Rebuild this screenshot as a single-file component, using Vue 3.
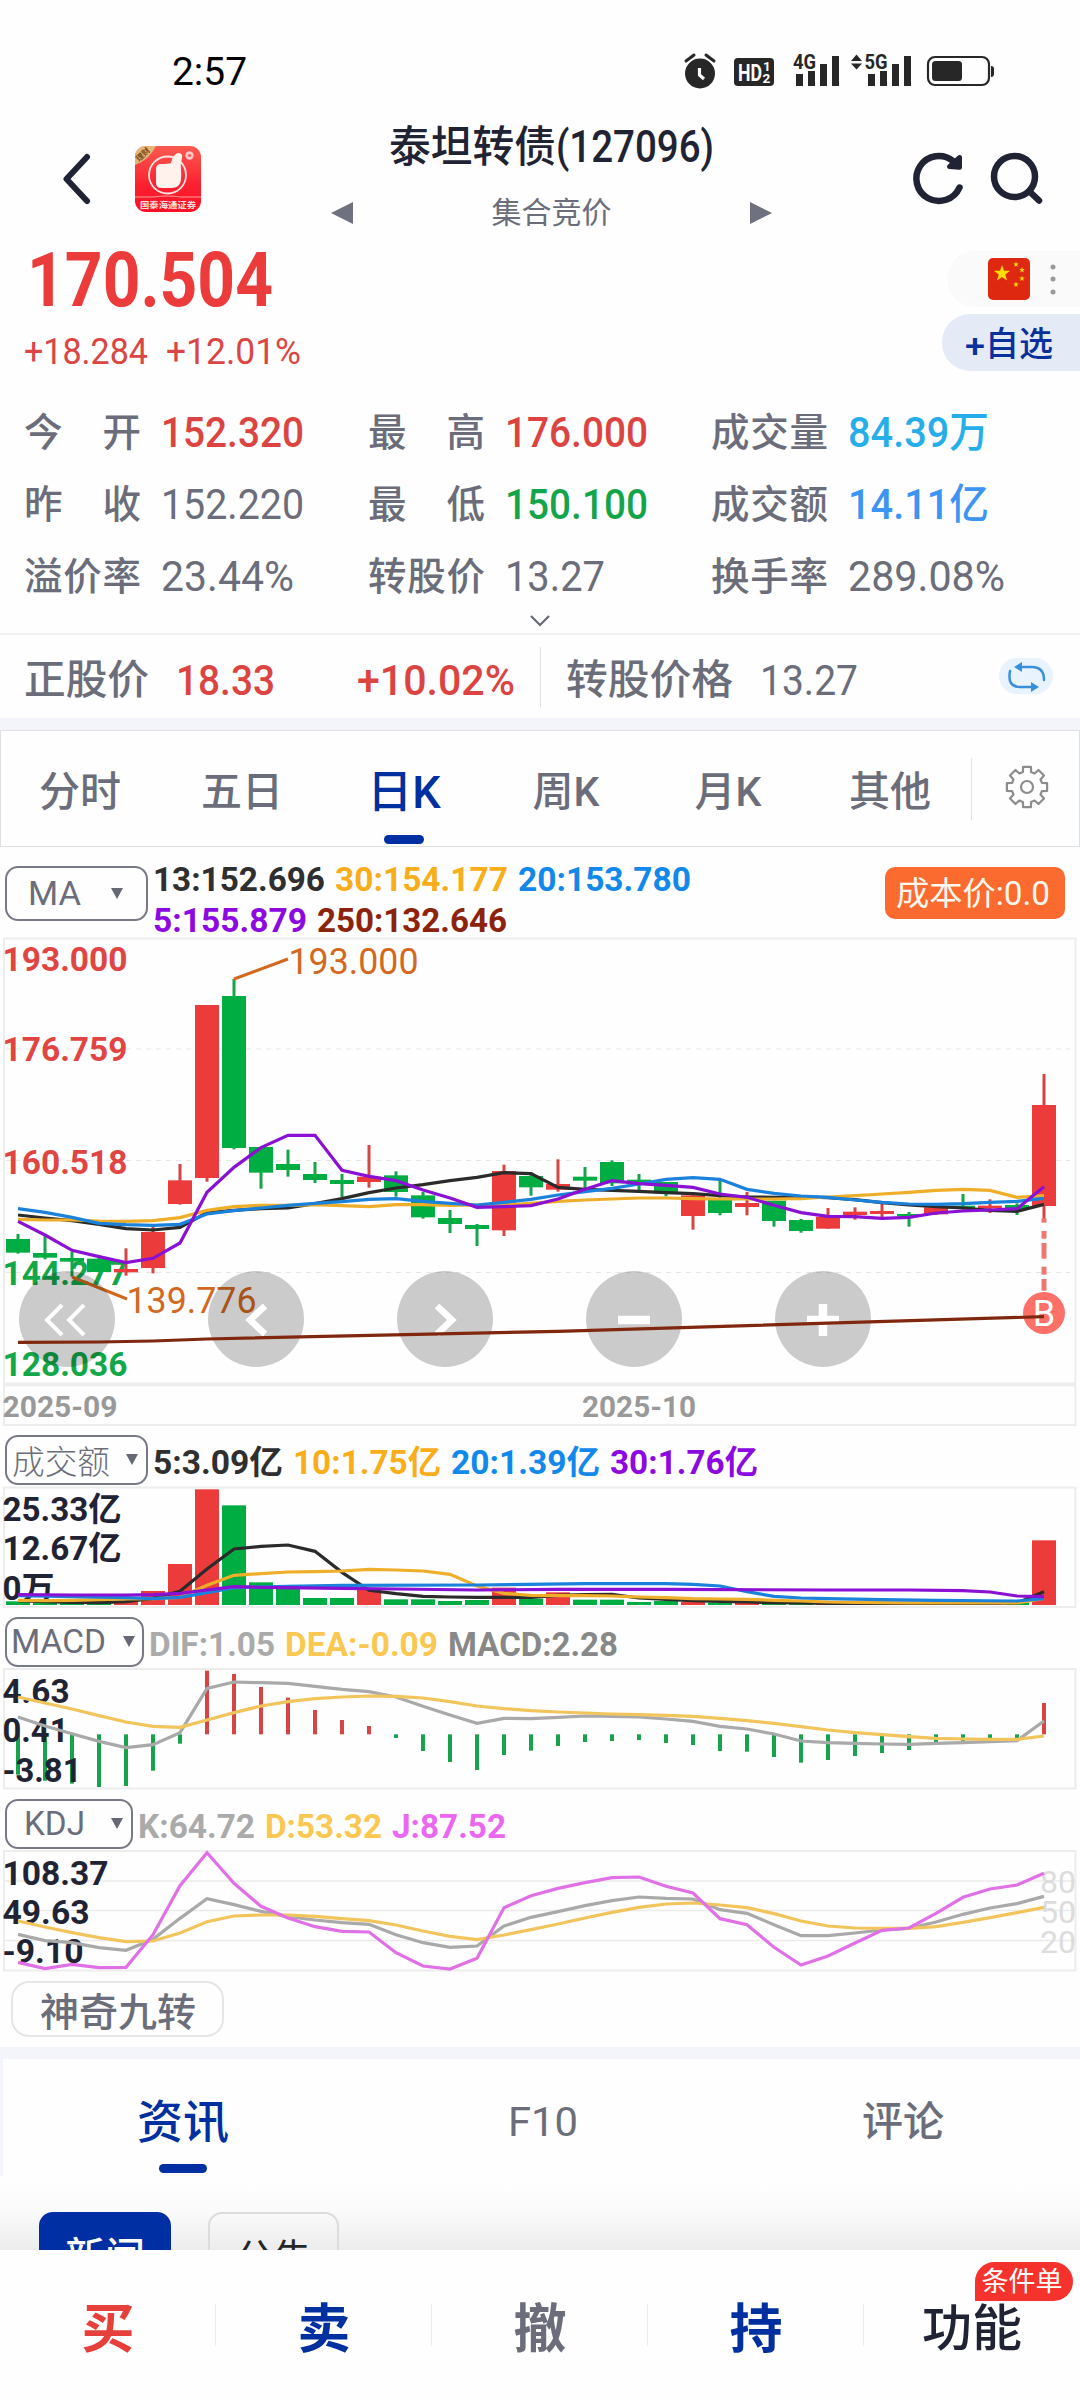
<script setup>
// Stretches a text run horizontally so that it occupies the given width in the layout.
const vFit = {
  mounted(el, { value }) {
    const natural = el.getBoundingClientRect().width
    el.style.transform = `scaleX(${value / natural})`
    el.style.marginRight = `${value - natural}px`
  }
}

const stats = [
  { label: '今开', value: '152.320', tone: 'up', w: 143 },
  { label: '最高', value: '176.000', tone: 'up', w: 143 },
  { label: '成交量', value: '84.39万', tone: 'cyan', w: 141 },
  { label: '昨收', value: '152.220', tone: 'plain', w: 143 },
  { label: '最低', value: '150.100', tone: 'down', w: 143 },
  { label: '成交额', value: '14.11亿', tone: 'blue', w: 141 },
  { label: '溢价率', value: '23.44%', tone: 'plain', w: 133 },
  { label: '转股价', value: '13.27', tone: 'plain', w: 100 },
  { label: '换手率', value: '289.08%', tone: 'plain', w: 157 }
]

const periods = ['分时', '五日', '日K', '周K', '月K', '其他']

const maLegend = [
  [
    { t: '13:152.696', c: '#2f2f2f', w: 172 },
    { t: '30:154.177', c: '#f8ae1b', w: 173 },
    { t: '20:153.780', c: '#1188ea', w: 173 }
  ],
  [
    { t: '5:155.879', c: '#8c0ae0', w: 154 },
    { t: '250:132.646', c: '#8c230c', w: 190 }
  ]
]
const volLegend = [
  { t: '5:3.09亿', c: '#2f2f2f', w: 130 },
  { t: '10:1.75亿', c: '#f8ae1b', w: 148 },
  { t: '20:1.39亿', c: '#1188ea', w: 149 },
  { t: '30:1.76亿', c: '#8c0ae0', w: 148 }
]
const macdLegend = [
  { t: 'DIF:1.05', c: '#aaaaaa', w: 126 },
  { t: 'DEA:-0.09', c: '#fac750', w: 153 },
  { t: 'MACD:2.28', c: '#888888', w: 170 }
]
const kdjLegend = [
  { t: 'K:64.72', c: '#aaaaaa', w: 117 },
  { t: 'D:53.32', c: '#fac750', w: 117 },
  { t: 'J:87.52', c: '#ea68f0', w: 114 }
]

const RED = '#eb3b3b'
const GREEN = '#00ad43'
const cx = (i) => 18 + 27 * i
const scale = (base) => (v) => base + v / 3
const yK = scale(1080)
const yV = scale(1430)
const yJ = scale(1780)

// [body top, body bottom, high, low, rising]
const candles = [
  [477, 518, 462, 521, 0], [519, 533, 467, 538, 0], [534, 545, 515, 590, 0], [536, 576, 530, 576, 0],
  [567, 577, 505, 587, 1], [456, 564, 440, 580, 1], [301, 372, 252, 374, 1], [-225, 294, -225, 305, 1],
  [-252, 204, -303, 208, 0], [201, 278, 201, 326, 0], [252, 270, 209, 290, 0], [282, 300, 246, 309, 0],
  [300, 312, 282, 352, 0], [290, 306, 195, 323, 1], [286, 336, 274, 350, 0], [346, 412, 336, 416, 0],
  [414, 432, 390, 459, 0], [435, 447, 432, 498, 0], [273, 451, 254, 468, 1], [288, 322, 276, 347, 0],
  [312, 329, 238, 335, 1], [290, 302, 261, 326, 0], [246, 310, 241, 318, 0], [299, 306, 282, 331, 0],
  [306, 340, 306, 349, 0], [346, 408, 346, 449, 1], [360, 399, 298, 406, 0], [369, 381, 336, 406, 1],
  [362, 423, 362, 440, 0], [420, 453, 417, 458, 0], [410, 446, 384, 446, 1], [395, 405, 382, 419, 1],
  [393, 402, 370, 413, 1], [402, 408, 396, 440, 0], [382, 403, 382, 405, 1], [377, 386, 342, 389, 0],
  [377, 385, 358, 399, 1], [375, 388, 370, 405, 0], [75, 378, -18, 418, 1]
].map(([t, b, h, l, up], i) => ({
  x: cx(i), top: yK(t), height: (b - t) / 3, high: yK(h), low: yK(l), fill: up ? RED : GREEN, up
}))

const volTops = [514, 516, 515, 517, 514, 483, 402, 178, 226, 457, 465, 504, 504, 478, 508, 508, 513, 510, 473, 506,
  487, 509, 509, 516, 513, 515, 517, 517, 519, 519, 521, 521, 521, 522, 521, 521, 521, 517, 331]
const volBars = volTops.map((v, i) => ({ x: cx(i) - 12, y: yV(v), h: (525 - v) / 3, fill: candles[i].fill }))

const macdEnds = [1034, 1052, 1061, 1071, 1068, 1022, 941, 722, 732, 771, 803, 840, 870, 888, 924, 963, 996, 1020, 975,
  962, 948, 936, 933, 930, 939, 945, 963, 965, 981, 998, 990, 978, 969, 960, 945, 935, 927, 924, 819]
const macdBars = macdEnds.map((v, i) => ({
  x: cx(i) - 2, y: yV(Math.min(v, 913)), h: Math.abs(v - 913) / 3, fill: v < 913 ? '#d64444' : '#16a34b'
}))

const line = (y, vals) =>
  vals.map((v, i) => (Array.isArray(v) ? `${cx(v[0])},${y(v[1])}` : `${cx(i)},${y(v)}`)).join(' ')

const maLines = [
  { c: '#2b2b2b', p: line(yK, [405, 414, 422, 433, 446, 450, 442, 398, 391, 386, 384, 371, 356, 338, 324, 314, 302, 292, 278, 281, 322, 328, 331, 334, 338, 341, 347, 351, 352, 351, 353, 359, 368, 375, 380, 384, 391, 394, 373]) },
  { c: '#efae2a', p: line(yK, [418, 420, 420, 423, 424, 422, 413, 391, 380, 376, 376, 374, 377, 380, 374, 374, 376, 375, 375, 370, 364, 360, 357, 354, 354, 356, 357, 357, 357, 356, 351, 347, 342, 337, 331, 328, 331, 352, 347]) },
  { c: '#1b82dc', p: line(yK, [386, 397, 412, 430, 434, 436, 433, 402, 392, 384, 376, 370, 365, 358, 356, 364, 370, 375, 367, 358, 345, 335, 325, 312, 298, 293, 298, 328, 340, 348, 352, 360, 367, 372, 373, 371, 367, 364, 355]) },
  { c: '#8a10d4', p: line(yK, [424, 465, 511, 530, 548, 535, 489, 337, 262, 203, 166, 166, 271, 289, 302, 330, 354, 382, 380, 377, 357, 328, 302, 311, 316, 322, 342, 352, 376, 398, 409, 410, 415, 412, 399, 393, 390, 386, 320]) }
]
const yearLine = line(yK, [[0, 787], [3, 786], [5, 783], [6, 780], [7, 777], [20, 754], [38, 710]])

const volLines = [
  { c: '#2b2b2b', p: line(yV, [512, 515, 517, 518, 515, 505, 484, 417, 357, 349, 345, 364, 427, 481, 491, 499, 501, 502, 502, 502, 496, 494, 493, 504, 508, 512, 514, 516, 518, 519, 520, 520, 520, 520, 520, 520, 520, 519, 485]) },
  { c: '#efae2a', p: line(yV, [511, 512, 511, 509, 507, 506, 502, 466, 436, 431, 426, 425, 423, 418, 420, 423, 433, 468, 490, 496, 497, 497, 498, 501, 503, 506, 507, 508, 511, 513, 516, 517, 518, 519, 519, 519, 519, 519, 505]) },
  { c: '#1b82dc', p: line(yV, [[0, 497], [2, 500], [4, 503], [5, 506], [6, 502], [7, 488], [8, 473], [10, 469], [12, 466], [17, 465], [21, 461], [24, 461], [25, 463], [26, 468], [27, 485], [28, 499], [29, 504], [30, 506], [32, 509], [34, 511], [37, 513], [38, 506]]) },
  { c: '#8a10d4', p: line(yV, [[0, 494], [2, 495], [4, 495], [5, 494], [6, 490], [7, 480], [8, 470], [9, 472], [12, 475], [14, 477], [17, 480], [20, 478], [24, 478], [30, 480], [33, 480], [35, 482], [36, 486], [37, 498], [38, 500]]) }
]
const macdLines = [
  { c: '#a9a9a9', p: line(yV, [861, 888, 911, 934, 953, 944, 908, 775, 756, 758, 760, 769, 778, 785, 801, 829, 855, 880, 865, 866, 862, 858, 859, 861, 867, 874, 889, 897, 912, 933, 938, 940, 942, 943, 940, 938, 935, 932, 873]) },
  { c: '#f2c55c', p: line(yV, [801, 819, 837, 857, 876, 889, 892, 870, 848, 828, 815, 806, 801, 798, 799, 804, 815, 828, 836, 842, 846, 849, 852, 854, 856, 859, 865, 872, 880, 890, 900, 908, 914, 920, 925, 927, 928, 928, 918]) }
]
const kdjLines = [
  { c: '#a9a9a9', p: line(yJ, [463, 482, 488, 503, 511, 478, 415, 356, 374, 394, 410, 420, 428, 433, 464, 488, 502, 498, 438, 412, 395, 377, 362, 351, 355, 357, 389, 400, 434, 467, 467, 459, 450, 445, 426, 403, 384, 371, 349]) },
  { c: '#f2c55c', p: line(yJ, [423, 441, 458, 473, 485, 483, 459, 425, 408, 405, 405, 409, 416, 422, 435, 453, 469, 479, 465, 449, 432, 414, 397, 382, 372, 369, 375, 383, 401, 423, 438, 444, 445, 445, 440, 427, 413, 398, 382]) },
  { c: '#e070e6', p: line(yJ, [547, 566, 553, 563, 562, 464, 317, 218, 310, 379, 414, 440, 454, 456, 518, 558, 567, 535, 383, 347, 325, 308, 293, 291, 319, 339, 416, 434, 502, 555, 528, 489, 451, 444, 400, 352, 327, 315, 280]) }
]

const priceAxis = [
  { t: '193.000', y: 971, c: '#e04543' },
  { t: '176.759', y: 1061, c: '#e04543' },
  { t: '160.518', y: 1174, c: '#e04543' },
  { t: '144.277', y: 1285, c: '#12a84a' },
  { t: '128.036', y: 1375.5, c: '#12a84a' }
]
const dashes = [[415, 428], [453, 476], [489, 536], [560, 584], [597, 632]].map(([a, b]) => ({ y: yK(a), h: (b - a) / 3 }))
const toolCenters = [67, 256, 445, 634, 823]

// Gear outline with eight teeth
const gear = (() => {
  const pts = []
  for (let k = 0; k < 8; k++) {
    const a = (k * Math.PI) / 4 - Math.PI / 2
    for (const [da, r] of [[-0.27, 15.5], [-0.19, 20.5], [0.19, 20.5], [0.27, 15.5]]) {
      pts.push(`${(22 + r * Math.cos(a + da)).toFixed(1)},${(22 + r * Math.sin(a + da)).toFixed(1)}`)
    }
  }
  return pts.join(' ')
})()

const star = (x, y, r) =>
  Array.from({ length: 10 }, (_, k) => {
    const a = (k * Math.PI) / 5 - Math.PI / 2
    const q = k % 2 ? r * 0.4 : r
    return `${(x + q * Math.cos(a)).toFixed(2)},${(y + q * Math.sin(a)).toFixed(2)}`
  }).join(' ')

const actions = [
  { t: '买', c: 'buy' }, { t: '卖', c: 'sell' }, { t: '撤', c: 'cancel' }, { t: '持', c: 'sell' }
]
</script>

<template>
  <div class="screen">
    <div class="status">
      <span class="clock"><span v-fit="75" class="fit">2:57</span></span>
      <svg class="status-icons" width="320" height="50" viewBox="680 48 320 50" fill="#272727">
        <circle cx="700" cy="73.5" r="15" />
        <path d="M686 61l8-6M714 61l-8-6" stroke="#272727" stroke-width="3" stroke-linecap="round" />
        <path d="M699.5 68v7l4.5 4" stroke="#fff" stroke-width="3.2" fill="none" />
        <rect x="734" y="58" width="40" height="28" rx="4" />
        <text x="738" y="80.5" font-size="23" font-weight="700" fill="#fff" textLength="24" lengthAdjust="spacingAndGlyphs">HD</text>
        <text x="763" y="71" font-size="13.5" font-weight="700" fill="#fff">1</text>
        <text x="762.5" y="83" font-size="13.5" font-weight="700" fill="#fff">2</text>
        <text x="793" y="68.5" font-size="20" font-weight="700" textLength="23" lengthAdjust="spacingAndGlyphs">4G</text>
        <path d="M796 74h7v12h-7zM808 71h7v15h-7zM820 64h7v22h-7zM832 56h7v30h-7z" />
        <path d="M851 61l5.500-6.500 5.500 6.500zM851 63.500h11l-5.500 6z" />
        <text x="864.500" y="68.500" font-size="20" font-weight="700" textLength="23" lengthAdjust="spacingAndGlyphs">5G</text>
        <path d="M868 74h7v12h-7zM880 71h7v15h-7zM892 64h7v22h-7zM904 56h7v30h-7z" />
        <rect x="928" y="57" width="61" height="28" rx="7" fill="none" stroke="#272727" stroke-width="2.200" />
        <rect x="932" y="61" width="30" height="20" rx="3.500" />
        <path d="M991 66q3 0 3 3v5q0 3-3 3z" />
      </svg>
    </div>

    <header class="header">
      <svg class="back" width="32" height="54" viewBox="0 0 32 54"><path d="M26 5 5.500 27 26 49" fill="none" stroke="#1f2333" stroke-width="6" stroke-linecap="round" stroke-linejoin="round" /></svg>
      <svg class="logo" width="66" height="66" viewBox="0 0 66 66">
        <defs>
          <linearGradient id="lg" x1="0" y1="0" x2="0" y2="1"><stop offset="0" stop-color="#fb5a50" /><stop offset=".6" stop-color="#fb2030" /><stop offset="1" stop-color="#fb1025" /></linearGradient>
          <clipPath id="lc"><rect width="66" height="66" rx="11" /></clipPath>
        </defs>
        <g clip-path="url(#lc)">
          <rect width="66" height="66" fill="url(#lg)" />
          <path d="M0 0H21Q14 14 0 19z" fill="#e2b878" />
          <text x="0" y="0" transform="translate(4 16) rotate(-43)" font-size="8" font-weight="700" fill="#7a4a1c">理财</text>
          <circle cx="32.500" cy="29" r="18.500" fill="none" stroke="#ffe4e0" stroke-width="1.800" />
          <path d="M36 17q2-9 7-10 5 0 4 5-2 6-1 12 1 12-2 15-2 3-8 3H26q-5 0-5-5V23q0-5 5-5 7 0 10-1z" fill="#fff1ec" />
          <circle cx="54.500" cy="9.500" r="4.200" fill="#ffc9c4" />
          <circle cx="54.500" cy="9.500" r="1.600" fill="#fb5a50" />
          <path d="M0 51h18q14-2 28 0h20" fill="none" stroke="#ff9a98" stroke-width="1.200" />
          <text x="5" y="62" font-size="8.500" font-weight="700" fill="#ffe0de" textLength="56" lengthAdjust="spacingAndGlyphs">国泰海通证券</text>
        </g>
      </svg>
      <div class="title-block">
        <div class="title"><span v-fit="167" class="fit">泰坦转债</span><span v-fit="158" class="fit">(127096)</span></div>
        <div class="sub">
          <svg width="22" height="22" viewBox="0 0 22 22"><path d="M22 0v22L0 11z" fill="#6f717e" /></svg>
          <span v-fit="120" class="fit">集合竞价</span>
          <svg width="22" height="22" viewBox="0 0 22 22"><path d="M0 0v22L22 11z" fill="#6f717e" /></svg>
        </div>
      </div>
      <svg class="head-icons" width="134" height="58" viewBox="910 150 134 58" fill="none" stroke="#1f2333" stroke-width="6.500" stroke-linecap="round">
        <path d="M959.500 187.500A22.500 22.500 0 1 1 953 161" />
        <path d="M949.500 166.500l10 .8L959.500 157.500z" fill="#1f2333" stroke-width="5" stroke-linejoin="round" />
        <circle cx="1014.500" cy="176.500" r="20.500" />
        <path d="M1029.500 191.500l9.500 9" />
      </svg>
    </header>

    <section class="quote">
      <div class="price-block">
        <div class="price"><span v-fit="246" class="fit">170.504</span></div>
        <div class="change"><span v-fit="124" class="fit">+18.284</span><span v-fit="135" class="fit">+12.01%</span></div>
      </div>
      <div class="pills">
        <div class="flag-pill">
          <svg width="42" height="42" viewBox="0 0 42 42">
            <rect width="42" height="42" rx="5" fill="#de2910" />
            <g fill="#ffde00">
              <polygon :points="star(14, 15.5, 8.5)" />
              <polygon :points="star(28, 6.5, 3)" /><polygon :points="star(34, 12, 3)" />
              <polygon :points="star(34, 20.5, 3)" /><polygon :points="star(28, 26.5, 3)" />
            </g>
          </svg>
          <svg class="dots" width="8" height="34" viewBox="0 0 8 34" fill="#999"><circle cx="4" cy="5" r="2.500" /><circle cx="4" cy="17" r="2.500" /><circle cx="4" cy="30" r="2.500" /></svg>
        </div>
        <div class="watch-pill"><span v-fit="20" class="fit plus">+</span><span v-fit="68" class="fit">自选</span></div>
      </div>
    </section>

    <section class="stats">
      <div v-for="s in stats" :key="s.label" class="stat">
        <span class="stat-label"><span v-for="ch in s.label" :key="ch">{{ ch }}</span></span>
        <span v-fit="s.w" class="fit stat-value" :class="s.tone">{{ s.value }}</span>
      </div>
    </section>
    <div class="expand"><svg width="24" height="14" viewBox="0 0 24 14"><path d="M3 1l9 9 9-9" fill="none" stroke="#666975" stroke-width="2.200" /></svg></div>

    <section class="underlying">
      <div class="under-left">
        <span v-fit="125" class="fit">正股价</span>
        <span v-fit="99" class="fit up num">18.33</span>
        <span v-fit="158" class="fit up num">+10.02%</span>
      </div>
      <span class="under-divider"></span>
      <div class="under-right">
        <span v-fit="167" class="fit">转股价格</span>
        <span v-fit="98" class="fit num">13.27</span>
        <svg class="sync" width="56" height="38" viewBox="0 0 56 38">
          <rect x="1" y="1" width="54" height="36" rx="18" fill="#e8f3fd" />
          <g fill="none" stroke="#3a8fdd" stroke-width="2.500" stroke-linecap="round"><path d="M22 10H34Q46 10 46 23" /><path d="M12 14Q9 30 22 30H36" /></g>
          <path d="M16 10l8-5v10zM41 30l-8-5v10z" fill="#3a8fdd" />
        </svg>
      </div>
    </section>
    <div class="band"></div>

    <nav class="periods">
      <div class="period-list">
        <div v-for="p in periods" :key="p" class="period" :class="{ active: p === '日K' }">{{ p }}</div>
      </div>
      <span class="period-divider"></span>
      <svg class="gear" width="44" height="44" viewBox="0 0 44 44" fill="none" stroke="#8c8c8c" stroke-width="2.200" stroke-linejoin="round"><polygon :points="gear" /><circle cx="22" cy="22" r="6" /></svg>
    </nav>

    <div class="ma-bar">
      <div class="picker ma"><span v-fit="53" class="fit">MA</span><i class="caret"></i></div>
      <div class="ma-lines">
        <div v-for="(row, r) in maLegend" :key="r" class="legend">
          <span v-for="l in row" :key="l.t" v-fit="l.w" class="fit" :style="{ color: l.c }">{{ l.t }}</span>
        </div>
      </div>
      <div class="cost"><span v-fit="154" class="fit">成本价:0.0</span></div>
    </div>

    <svg class="chart" width="1080" height="489" viewBox="0 937 1080 489">
      <path d="M4 938.500H1075.500V1383.500H4zM4 1385.500H1075.500V1425H4z" fill="none" stroke="#ededed" stroke-width="2" />
      <path d="M6 1049H1070M6 1160.500H1070M6 1272.500H1070" stroke="#e6e6e6" stroke-width="1.200" stroke-dasharray="5 5" />
      <text v-for="a in priceAxis" :key="a.t" x="2.500" :y="a.y" :fill="a.c" class="axis" textLength="125" lengthAdjust="spacingAndGlyphs">{{ a.t }}</text>
      <g v-for="k in candles" :key="k.x" :fill="k.fill">
        <rect :x="k.x - 1.500" :y="k.high" width="3" :height="k.low - k.high" :fill="k.up ? '#d64444' : '#16a34b'" />
        <rect :x="k.x - 12" :y="k.top" width="24" :height="k.height" />
      </g>
      <polyline v-for="l in maLines" :key="l.c" :points="l.p" :stroke="l.c" class="curve" />
      <path d="M234 979L288 959M72 1277L127 1299" stroke="#d2691e" stroke-width="3" />
      <g font-size="36" fill="#d2691e">
        <text x="288.500" y="974" textLength="130" lengthAdjust="spacingAndGlyphs">193.000</text>
        <text x="126.500" y="1312.500" textLength="130" lengthAdjust="spacingAndGlyphs">139.776</text>
      </g>
      <circle v-for="c in toolCenters" :key="c" :cx="c" cy="1319" r="48" fill="rgba(0,0,0,.2)" />
      <g fill="none" stroke="#fff" stroke-width="4">
        <path d="M62 1305L47 1320l15 15M84 1305l-15 15 15 15" />
        <path d="M265 1306l-15 14 15 14M437 1306l15 14-15 14" stroke-width="6.500" />
        <path d="M618 1320h32M807 1320h32M823 1304v32" stroke-width="8.500" />
      </g>
      <rect v-for="d in dashes" :key="d.y" x="1041.500" :y="d.y" width="5" :height="d.h" fill="#ec7872" />
      <circle cx="1044" cy="1313" r="21" fill="#ff7069" />
      <text x="1044" y="1326" font-size="36" fill="#fff" text-anchor="middle">B</text>
      <polyline :points="yearLine" stroke="#80280f" class="curve" />
      <g font-size="30" font-weight="700" fill="#999">
        <text x="2.500" y="1417" textLength="115" lengthAdjust="spacingAndGlyphs">2025-09</text>
        <text x="582" y="1417" textLength="114" lengthAdjust="spacingAndGlyphs">2025-10</text>
      </g>
    </svg>

    <div class="ind-bar">
      <div class="picker vol"><span v-fit="98" class="fit thin">成交额</span><i class="caret"></i></div>
      <div class="legend"><span v-for="l in volLegend" :key="l.t" v-fit="l.w" class="fit" :style="{ color: l.c }">{{ l.t }}</span></div>
    </div>
    <svg class="chart" width="1080" height="122" viewBox="0 1486 1080 122">
      <rect x="4" y="1487.500" width="1071.500" height="119.500" class="frame" />
      <g class="axis dark">
        <text x="2.500" y="1521" textLength="119" lengthAdjust="spacingAndGlyphs">25.33亿</text>
        <text x="2.500" y="1560" textLength="119" lengthAdjust="spacingAndGlyphs">12.67亿</text>
        <text x="2.500" y="1600" textLength="52" lengthAdjust="spacingAndGlyphs">0万</text>
      </g>
      <rect v-for="b in volBars" :key="b.x" :x="b.x" :y="b.y" width="24" :height="b.h" :fill="b.fill" />
      <polyline v-for="l in volLines" :key="l.c" :points="l.p" :stroke="l.c" class="curve" />
    </svg>

    <div class="ind-bar">
      <div class="picker macd"><span v-fit="95" class="fit">MACD</span><i class="caret"></i></div>
      <div class="legend"><span v-for="l in macdLegend" :key="l.t" v-fit="l.w" class="fit" :style="{ color: l.c }">{{ l.t }}</span></div>
    </div>
    <svg class="chart" width="1080" height="122" viewBox="0 1668 1080 122">
      <rect x="4" y="1669" width="1071.500" height="119.500" class="frame" />
      <rect v-for="b in macdBars" :key="b.x" :x="b.x" :y="b.y" width="4" :height="b.h" :fill="b.fill" />
      <g class="axis dark">
        <text x="2.500" y="1703" textLength="67" lengthAdjust="spacingAndGlyphs">4.63</text>
        <text x="2.500" y="1742" textLength="66" lengthAdjust="spacingAndGlyphs">0.41</text>
        <text x="2.500" y="1782" textLength="79" lengthAdjust="spacingAndGlyphs">-3.81</text>
      </g>
      <polyline v-for="l in macdLines" :key="l.c" :points="l.p" :stroke="l.c" class="curve" />
    </svg>

    <div class="ind-bar">
      <div class="picker kdj"><span v-fit="61" class="fit">KDJ</span><i class="caret"></i></div>
      <div class="legend"><span v-for="l in kdjLegend" :key="l.t" v-fit="l.w" class="fit" :style="{ color: l.c }">{{ l.t }}</span></div>
    </div>
    <svg class="chart" width="1080" height="122" viewBox="0 1850 1080 122">
      <rect x="4" y="1851" width="1071.500" height="119.500" class="frame" />
      <path d="M4 1881H1075M4 1910.500H1075M4 1940.500H1075" stroke="#ebebeb" stroke-width="1.500" />
      <g font-size="31" fill="#dcdcdc">
        <text x="1040" y="1893" textLength="36" lengthAdjust="spacingAndGlyphs">80</text>
        <text x="1040" y="1923" textLength="36" lengthAdjust="spacingAndGlyphs">50</text>
        <text x="1040" y="1953" textLength="36" lengthAdjust="spacingAndGlyphs">20</text>
      </g>
      <g class="axis dark">
        <text x="2.500" y="1885" textLength="106" lengthAdjust="spacingAndGlyphs">108.37</text>
        <text x="2.500" y="1924" textLength="87" lengthAdjust="spacingAndGlyphs">49.63</text>
        <text x="2.500" y="1963" textLength="81" lengthAdjust="spacingAndGlyphs">-9.10</text>
      </g>
      <polyline v-for="l in kdjLines" :key="l.c" :points="l.p" :stroke="l.c" class="curve" />
    </svg>

    <div class="magic"><span v-fit="156" class="fit">神奇九转</span></div>
    <div class="band"></div>

    <nav class="info-tabs">
      <div class="info-tab on">资讯</div>
      <div class="info-tab"><span v-fit="70" class="fit">F10</span></div>
      <div class="info-tab">评论</div>
    </nav>

    <div class="news">
      <div class="chip solid">新闻</div>
      <div class="chip">公告</div>
    </div>

    <footer class="actions">
      <div v-for="a in actions" :key="a.t" class="action" :class="a.c">{{ a.t }}</div>
      <div class="action more">功能<span class="badge">条件单</span></div>
    </footer>
  </div>
</template>

<style>
body {
  margin: 0;
  background: #fff;
}
</style>

<style scoped>
.screen {
  width: 1080px;
  height: 2400px;
  overflow: hidden;
  display: flex;
  flex-direction: column;
  background: #fefefe;
  color: #6b6d7a;
  font-family: Roboto, "Noto Sans CJK SC", sans-serif;
}
.screen > * {
  flex: none;
}
.fit {
  display: inline-block;
  white-space: nowrap;
  transform-origin: 0 50%;
}
svg {
  display: block;
  flex: none;
}
.up { color: #dc4441; }
.down { color: #14a54b; }
.cyan { color: #27aeea; }
.blue { color: #3c95f2; }
.plain { color: #6b6d7a; }

.status {
  height: 98px;
  display: flex;
  align-items: flex-end;
  justify-content: space-between;
  padding: 0 80px 0 172px;
}
.clock {
  height: 50px;
  line-height: 49px;
  font-size: 38px;
  color: #000;
}
.header {
  height: 142px;
  display: flex;
  align-items: flex-start;
}
.back { margin: 54px 0 0 61px; }
.logo { margin: 48px 0 0 42px; }
.title-block {
  margin: 22px 0 0 130px;
  width: 441px;
}
.title {
  height: 54px;
  line-height: 55px;
  font-size: 43px;
  color: #1f2333;
  padding-left: 58px;
  display: flex;
  font-weight: 500;
}
.title .fit:last-child { font-size: 44px; }
.sub {
  margin-top: 19px;
  height: 40px;
  line-height: 40px;
  font-size: 30px;
  display: flex;
  align-items: center;
  justify-content: space-between;
}
.head-icons { margin: 52px 0 0 138px; }

.quote {
  height: 155px;
  display: flex;
  justify-content: space-between;
}
.price {
  margin-top: 5px;
  padding-left: 27px;
  height: 70px;
  line-height: 70px;
  font-size: 76px;
  font-weight: 700;
  color: #eb3b3b;
}
.change {
  margin-top: 16px;
  padding-left: 24px;
  line-height: 42px;
  font-size: 37px;
  color: #d94644;
  display: flex;
  gap: 18px;
}
.pills {
  display: flex;
  flex-direction: column;
  align-items: flex-end;
}
.flag-pill {
  margin-top: 11px;
  width: 92px;
  height: 56px;
  padding-left: 41px;
  background: #fafafa;
  border-radius: 28px 0 0 28px;
  display: flex;
  align-items: center;
}
.dots { margin-left: 19px; }
.watch-pill {
  margin-top: 7px;
  width: 116px;
  height: 57px;
  line-height: 61px;
  padding-left: 22px;
  display: flex;
  background: #e4eaf6;
  border-radius: 28px 0 0 28px;
  color: #0a309b;
  font-size: 34px;
  font-weight: 500;
}
.plus { line-height: 63px; margin-left: 1px; }

.stats {
  height: 216px;
  padding: 0 0 0 24px;
  display: grid;
  grid-template-columns: 344px 343px 1fr;
  grid-auto-rows: 72px;
}
.stat {
  display: flex;
  gap: 20px;
  align-items: center;
  height: 75px;
}
.stat-label {
  width: 117px;
  font-size: 38.5px;
  font-weight: 500;
  line-height: 76px;
  display: flex;
  justify-content: space-between;
}
.stat-value {
  font-size: 42px;
  line-height: 75px;
}
.stat-value.up, .stat-value.down, .stat-value.cyan, .stat-value.blue { font-weight: 500; }
.expand {
  height: 22px;
  display: flex;
  justify-content: center;
  align-items: center;
}
.underlying {
  height: 85px;
  box-sizing: border-box;
  border-top: 2px solid #f3f3f5;
  display: flex;
  font-size: 41px;
  line-height: 90px;
}
.under-left, .under-right {
  display: flex;
  font-weight: 500;
}
.num {
  font-size: 43px;
  font-weight: 400;
  margin-left: 27px;
}
.num.up { font-weight: 500; }
.under-left {
  box-sizing: border-box;
  width: 540px;
  padding-left: 24px;
}
.under-left .num + .num { margin-left: 82px; }
.under-divider {
  width: 1px;
  height: 60px;
  margin-top: 12px;
  background: #e0e1e6;
}
.under-right {
  flex: 1;
  padding-left: 25px;
}
.sync { margin: 22px 26px 0 auto; }
.band {
  height: 12px;
  background: #f4f5fa;
}

.periods {
  height: 117px;
  box-sizing: border-box;
  border: 1px solid #e0e1e5;
  display: flex;
  align-items: flex-start;
}
.period-list {
  width: 972px;
  margin: 0 0 0 -2px;
  display: flex;
}
.period {
  flex: 1;
  height: 115px;
  line-height: 123px;
  font-size: 41px;
  font-weight: 500;
  text-align: center;
}
.period.active {
  font-size: 45px;
  color: #0030a0;
  display: flex;
  flex-direction: column;
  align-items: center;
}
.period.active::after {
  content: "";
  width: 40px;
  height: 9px;
  border-radius: 5px;
  background: #002fa3;
  margin-top: -19px;
}
.period-divider {
  width: 1px;
  height: 62px;
  margin-top: 27px;
  background: #e3e3e6;
}
.gear { margin: 34px 0 0 33px; }

.ma-bar {
  height: 90px;
  display: flex;
  align-items: flex-start;
}
.picker {
  box-sizing: border-box;
  height: 50px;
  margin-left: 5px;
  border: 2px solid #777985;
  border-radius: 13px;
  display: flex;
  align-items: center;
  justify-content: space-between;
  font-size: 33px;
}
.picker.ma {
  width: 143px;
  height: 55px;
  margin-top: 19px;
  padding: 0 23px 0 21px;
}
.picker.vol { width: 143px; padding: 0 8px 0 5px; }
.picker.macd { width: 139px; padding: 0 7px 0 4px; }
.picker.kdj { width: 128px; padding: 0 8px 0 17px; }
.thin { font-weight: 300; font-size: 33px; }
.caret {
  border: 6.500px solid transparent;
  border-top: 11px solid #666975;
  border-bottom: 0;
}
.legend {
  display: flex;
  gap: 10px;
  margin-left: 5px;
  font-size: 33px;
  line-height: 41px;
  font-weight: 700;
}
.ma-lines { padding-top: 12px; }
.cost {
  margin: 20px 15px 0 auto;
  width: 180px;
  height: 52px;
  line-height: 55px;
  border-radius: 10px;
  background: #fb6a2f;
  color: #fff8ef;
  font-size: 32.500px;
  box-sizing: border-box;
  padding-left: 11px;
}
.axis {
  font-size: 33px;
  font-weight: 700;
}
.dark { fill: #1f2333; }
.curve {
  fill: none;
  stroke-width: 3.200;
}
.frame {
  fill: none;
  stroke: #ededed;
  stroke-width: 2;
}
.ind-bar {
  height: 60px;
  display: flex;
  align-items: center;
}
.ind-bar .picker { margin-top: 7px; }
.ind-bar .legend { padding-top: 12px; }

.magic {
  width: 182px;
  height: 52px;
  margin: 9px 0 10px 11px;
  border: 2px solid #e6e6e8;
  border-radius: 18px;
  line-height: 60px;
  font-size: 38.500px;
  font-weight: 500;
  padding-left: 27px;
}
.info-tabs {
  height: 117px;
  border-left: 3px solid #f4f5fa;
  display: flex;
}
.info-tab {
  flex: none;
  width: 360px;
  line-height: 126px;
  height: 117px;
  text-align: center;
  font-size: 41px;
}
.info-tab:last-child { font-weight: 500; }
.info-tab.on {
  color: #0030a0;
  font-size: 46px;
  font-weight: 500;
  display: flex;
  flex-direction: column;
  align-items: center;
}
.info-tab.on::after {
  content: "";
  width: 48px;
  height: 9px;
  border-radius: 5px;
  background: #002fa3;
  margin-top: -21px;
}
.news {
  height: 74px;
  overflow: hidden;
  display: flex;
  align-items: flex-start;
  gap: 37px;
  padding-left: 39px;
  background: linear-gradient(#fefefe 12%, #fafafa 50%, #ececec);
}
.chip {
  box-sizing: border-box;
  width: 131px;
  height: 90px;
  margin-top: 36px;
  line-height: 88px;
  border: 2px solid #dcdcdc;
  border-radius: 14px;
  text-align: center;
  color: #262626;
  font-size: 38px;
}
.chip.solid {
  width: 132px;
  background: #002fa3;
  border-color: #002fa3;
  color: #fff;
  font-weight: 500;
  font-size: 40px;
}
.actions {
  height: 150px;
  background: #fefefe;
  display: flex;
}
.action {
  flex: 1;
  position: relative;
  text-align: center;
  font-size: 53px;
  font-weight: 700;
  line-height: 161px;
}
.action:not(.more)::after {
  content: "";
  position: absolute;
  right: 0;
  top: 54px;
  width: 1px;
  height: 42px;
  background: #ececf0;
}
.buy { color: #e6403d; }
.sell { color: #0030a0; }
.more {
  color: #1f2333;
  font-size: 50px;
  font-weight: 500;
  line-height: 158px;
}
.badge {
  position: absolute;
  left: 111px;
  top: 12px;
  width: 98px;
  height: 39px;
  border-radius: 20px 20px 20px 0;
  background: #f6322d;
  color: #fff;
  font-size: 27px;
  font-weight: 400;
  line-height: 41px;
  text-indent: -4px;
}
</style>
